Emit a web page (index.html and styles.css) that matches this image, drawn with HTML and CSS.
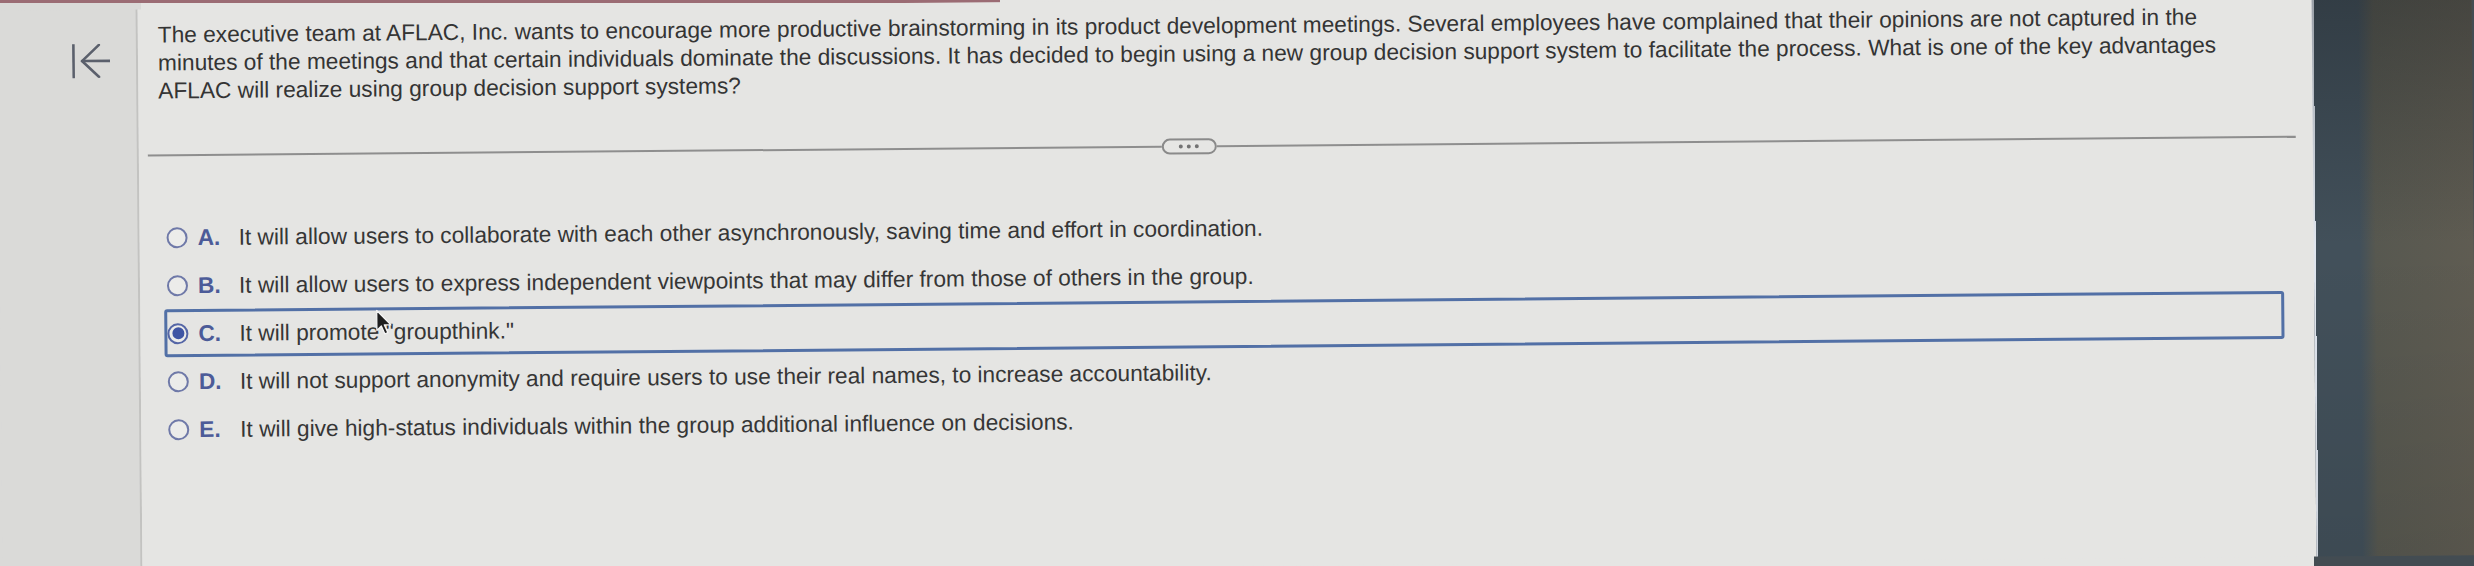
FILE: index.html
```html
<!DOCTYPE html>
<html lang="en">
<head>
<meta charset="utf-8">
<title>Question</title>
<link rel="stylesheet" href="styles.css">
</head>
<body>
<div class="screen">
  <aside class="sidebar">
    <svg class="back-icon" width="38" height="34" viewBox="0 0 38 34" aria-hidden="true">
      <path d="M1.5 0 V34" />
      <path d="M10 17 H38" />
      <path d="M27 1 L10 17 L27 33" />
    </svg>
  </aside>
  <main class="panel">
    <p class="question">The executive team at AFLAC, Inc. wants to encourage more productive brainstorming in its product development meetings. Several employees have complained that their opinions are not captured in the minutes of the meetings and that certain individuals dominate the discussions. It has decided to begin using a new group decision support system to facilitate the process. What is one of the key advantages AFLAC will realize using group decision support systems?</p>
    <div class="divider">
      <span class="rule"></span>
      <span class="pill"><i></i><i></i><i></i></span>
      <span class="rule"></span>
    </div>
    <ul class="options">
      <li class="option"><span class="radio"></span><span class="key">A.</span><span class="text">It will allow users to collaborate with each other asynchronously, saving time and effort in coordination.</span></li>
      <li class="option"><span class="radio"></span><span class="key">B.</span><span class="text">It will allow users to express independent viewpoints that may differ from those of others in the group.</span></li>
      <li class="option selected"><span class="radio"></span><span class="key">C.</span><span class="text">It will promote "groupthink."</span>
        <svg class="cursor" width="17" height="26" viewBox="0 0 17 26" aria-hidden="true"><path d="M1.5 1 V21 L6 16.5 L9.5 24.5 L12.5 23.2 L9 15.5 H15.5 Z"/></svg>
      </li>
      <li class="option"><span class="radio"></span><span class="key">D.</span><span class="text">It will not support anonymity and require users to use their real names, to increase accountability.</span></li>
      <li class="option"><span class="radio"></span><span class="key">E.</span><span class="text">It will give high-status individuals within the group additional influence on decisions.</span></li>
    </ul>
  </main>
  <div class="bezel"></div>
</div>
</body>
</html>
```
FILE: styles.css
```css
html, body {
  margin: 0;
  padding: 0;
}

body {
  width: 2474px;
  height: 566px;
  overflow: hidden;
  font-family: "Liberation Sans", Arial, sans-serif;
  background:
    linear-gradient(#9b6c74, #9b6c74) 0 0 / 1000px 3px no-repeat,
    linear-gradient(to right, #dadad8 0 141px, #e5e5e3 141px 2314px, #434c52 2314px);
}

.screen {
  display: flex;
  width: 2474px;
  height: 566px;
  transform: rotate(-0.5deg);
  transform-origin: 50% 50%;
}

/* left rail */
.sidebar {
  flex: 0 0 140px;
  box-sizing: border-box;
  padding: 34px 0 0 74px;
  background: #dadad8;
  border-right: 2px solid #c3c3c1;
}

.back-icon {
  display: block;
  fill: none;
  stroke: #5b606c;
  stroke-width: 2.6;
  stroke-linecap: round;
  stroke-linejoin: round;
}

/* main panel */
.panel {
  flex: 1 1 auto;
  display: flex;
  flex-direction: column;
  background: #e5e5e3;
  min-width: 0;
}

.question {
  margin: 0;
  padding: 11px 47px 0 20px;
  font-size: 22.7px;
  line-height: 28px;
  color: #343434;
}

.divider {
  display: grid;
  grid-template-columns: 1013fr 55px 1078fr;
  align-items: center;
  height: 16px;
  margin: 43px 17px 0 9px;
}

.rule {
  height: 2px;
  background: #8e8e8e;
}

.pill {
  box-sizing: border-box;
  height: 16px;
  border: 2px solid #8a8a8a;
  border-radius: 8px;
  display: flex;
  justify-content: center;
  align-items: center;
  gap: 4px;
  background: #e6e6e4;
}

.pill i {
  width: 4px;
  height: 4px;
  border-radius: 50%;
  background: #737373;
}

.options {
  list-style: none;
  margin: 50px 30px 0 24px;
  padding: 0;
}

.option {
  position: relative;
  box-sizing: border-box;
  height: 48px;
  display: flex;
  align-items: center;
  border: 3px solid transparent;
  border-radius: 3px;
  font-size: 22.7px;
  color: #363636;
}

.option.selected {
  border-color: #5270a6;
}

.radio {
  box-sizing: border-box;
  flex: 0 0 21px;
  width: 21px;
  height: 21px;
  border: 2.5px solid #6f79a8;
  border-radius: 50%;
  background: #ececea;
  position: relative;
}

.selected .radio {
  border-color: #5566a6;
}

.selected .radio::after {
  content: "";
  position: absolute;
  inset: 2.5px;
  border-radius: 50%;
  background: #3f55a4;
}

.key {
  flex: 0 0 41px;
  margin-left: 10px;
  font-weight: bold;
  color: #4c5b98;
}

.text {
  white-space: nowrap;
}

.cursor {
  position: absolute;
  left: 208px;
  top: -1px;
  fill: #1e1e1e;
  stroke: #f4f4f4;
  stroke-width: 1.3;
  stroke-linejoin: round;
}

/* photo edge beyond the display */
.bezel {
  flex: 0 0 160px;
  background:
    linear-gradient(to bottom, rgba(20, 24, 28, 0.35), rgba(0, 0, 0, 0) 45%, rgba(0, 0, 0, 0.08)),
    linear-gradient(to right, #e0e6ef 0 2px, #42505a 2px 46px, #575850 62px, #5f5c52 100%);
}
```
